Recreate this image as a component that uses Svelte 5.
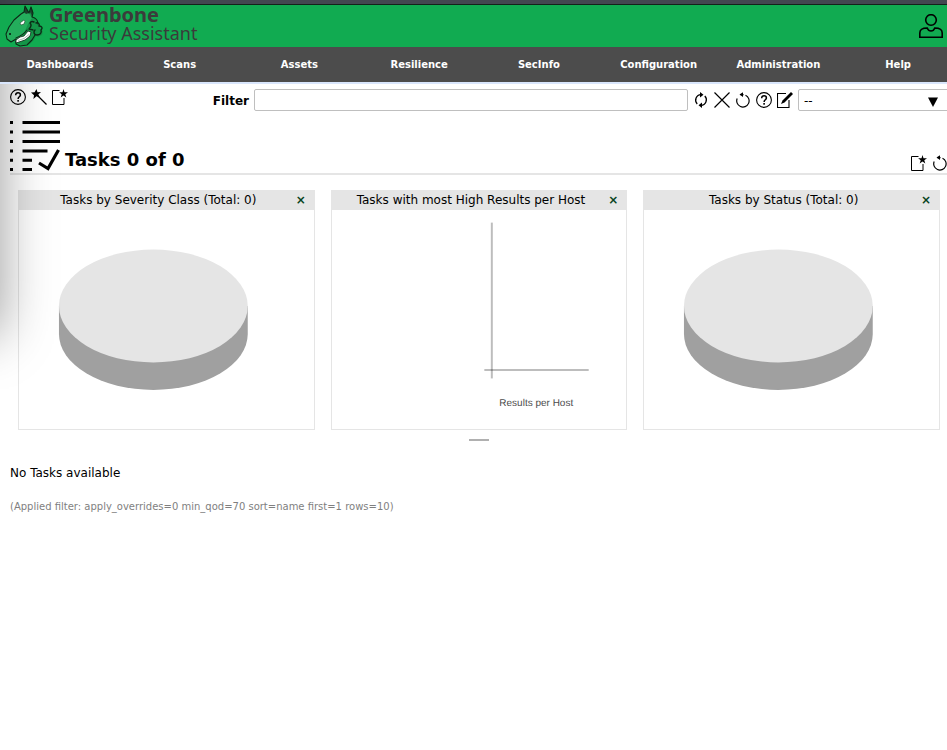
<script>
  const menu = ['Dashboards', 'Scans', 'Assets', 'Resilience', 'SecInfo', 'Configuration', 'Administration', 'Help'];
  const panels = [
    { title: 'Tasks by Severity Class (Total: 0)', kind: 'pie' },
    { title: 'Tasks with most High Results per Host', kind: 'bars' },
    { title: 'Tasks by Status (Total: 0)', kind: 'pie' }
  ];
  let filter = $state('');
</script>

{#snippet help()}
  <svg class="icon" viewBox="0 0 16 16" aria-hidden="true">
    <circle cx="8" cy="8" r="7.4" fill="none" stroke="#000" stroke-width="1.1" />
    <path d="M5.7 6.2C5.7 4.6 6.6 3.8 8 3.8s2.4.8 2.4 2.1c0 1.8-2.3 1.9-2.3 4" fill="none" stroke="#000" stroke-width="1.5" />
    <rect x="7.3" y="11" width="1.6" height="1.7" />
  </svg>
{/snippet}

{#snippet newDoc()}
  <svg class="icon" viewBox="0 0 16 16" aria-hidden="true">
    <path d="M7.5 1.5H.5V15.5H12V9" fill="none" stroke="#000" />
    <path d="M11.500 0l1 3.200H16l-2.700 2 1 3.200-2.800-1.900-2.800 1.900 1-3.200-2.600-2h3.400z" />
  </svg>
{/snippet}

{#snippet reset()}
  <svg class="icon" viewBox="0 0 16 16" aria-hidden="true">
    <path d="M5.500 2.600H8.500M10.500 3.200a6.200 6.200 0 1 1-8.300 3.200" fill="none" stroke="#000" stroke-width="1.200" />
    <path d="M4.500 2.600L8 .2v4.800z" />
  </svg>
{/snippet}

<div class="page">
  <div class="strip"></div>
  <header>
    <a class="brand" href="#home">
      <svg class="dragon" viewBox="0 0 40 42" aria-hidden="true">
        <path d="M16 9l3-2 1-6 3 5 1 2 2-6 2 5-1 6c3 1 6 3 6 7l3 1-1 3 3 2-1 4-4 2-2-1-2 4-4 4-7 1-5-1-1-3-5-1-4-2-1-5 3-7 5-6z" fill="#149448" />
        <path d="M16 9L9 15l-5 7-3 7 1 5 4 3c6-3 10-4 13-9l4-9 4-6-4-6z" fill="#24ad5c" />
        <path d="M19 7l1-6 4 7-3 1zM25 7l1-5 2 5-1 4z" fill="#1b3f2b" />
        <g fill="none" stroke="#0c2916" stroke-width="1.100" stroke-linejoin="round" stroke-linecap="round">
          <path d="M19 7l1-6 4 7 2-6 2 6-1 4c4 1 6 3 6 7M16 9L9 15l-5 7-3 7 1 5 4 3 5-3M19 7l-3 2M11 36v3l4 2 7-1 5-5 3-5" />
          <path d="M29 17c-2-1-3-1-4 1 2 2 1 4-1 6M31 18c2-1 4 1 3 3 3 0 4 2 2 4 1 3-1 5-4 5s-4-3-2-5M24 24c1 1 3 0 4 1" stroke-width="1.400" />
          <path d="M22 25c-3 4-6 6-11 8" />
        </g>
        <path d="M15 18l4-3 1 1-1 3-3 1z" fill="#fff" stroke="#0c2916" stroke-width=".5" />
        <path d="M11 35l4-3 4-1 4-5 3 1-1 4-5 4-6 2-3 1z" fill="#fff" stroke="#0c2916" stroke-width=".8" />
        <path d="M13 35.500l6-2 5-4" fill="none" stroke="#86a390" stroke-width=".7" />
        <circle cx="5" cy="29" r=".9" />
      </svg>
      <span class="name"><strong>Greenbone</strong><span>Security Assistant</span></span>
    </a>
    <button class="user" aria-label="User settings">
      <svg viewBox="0 0 24 24" aria-hidden="true">
        <g fill="none" stroke="#000" stroke-width="1.600">
          <circle cx="12" cy="6" r="5.300" />
          <path d="M.8 23.200V19c0-3.300 3-5 7.400-5 .8 2 2 3 3.800 3s3-1 3.800-3c4.400 0 7.400 1.700 7.400 5v4.200z" />
        </g>
      </svg>
    </button>
  </header>
  <nav>
    {#each menu as item}
      <a href="#{item.toLowerCase()}">{item}</a>
    {/each}
  </nav>

  <main>
    <div class="toolbar">
      <div class="icons">
        <button aria-label="Help: Tasks">{@render help()}</button>
        <button aria-label="Task Wizard">
          <svg class="icon" viewBox="0 0 16 16" aria-hidden="true">
            <path d="M6 6l9.500 9.500" stroke="#000" stroke-width="1.300" />
            <path d="M5.500 0l1 3.300 3.500-.2-2.700 2.300 1.700 3.400-3.500-1.500L2.400 10l.6-3.700L0 3.400l3.600-.2z" />
          </svg>
        </button>
        <button aria-label="New Task">{@render newDoc()}</button>
      </div>
      <form onsubmit={(e) => e.preventDefault()}>
        <label for="filter">Filter</label>
        <input id="filter" type="text" bind:value={filter} />
        <button aria-label="Update Filter">
          <svg class="icon" viewBox="0 0 16 16" aria-hidden="true">
            <path d="M4.200 12A5.500 5.500 0 0 1 8 2.700M11.800 4a5.500 5.500 0 0 1-3.800 9.300" fill="none" stroke="#000" stroke-width="1.300" />
            <path d="M7 0l3.500 2.700L7 5.400zM9 10.600v5.400l-3.500-2.700z" />
          </svg>
        </button>
        <button type="button" aria-label="Remove Filter">
          <svg class="icon" viewBox="0 0 16 16" aria-hidden="true"><path d="M.5.5l15 15M15.500.5l-15 15" stroke="#000" stroke-width="1.200" /></svg>
        </button>
        <button type="button" aria-label="Reset Filter">{@render reset()}</button>
        <button type="button" aria-label="Help: Powerfilter">{@render help()}</button>
        <button type="button" aria-label="Edit Filter">
          <svg class="icon" viewBox="0 0 16 16" aria-hidden="true">
            <path d="M9 1.500H.5V15.500H12V8" fill="none" stroke="#000" stroke-width="1.100" />
            <path d="M14 0l2 2-8.500 8.500L4 12l1.500-3.500z" />
          </svg>
        </button>
        <div class="choice">
          <select aria-label="Saved filter"><option>--</option></select>
          <svg viewBox="0 0 10 10" aria-hidden="true"><path d="M0 .5h10L5 10z" /></svg>
        </div>
      </form>
    </div>

    <div class="heading">
      <svg class="tasks" viewBox="0 0 50 50" aria-hidden="true">
        <path d="M0 1.500h3M0 11h3M0 20.500h3M0 30h3M0 39.300h3M0 48.500h3M12.500 1.500H50M12.500 11H50M12.500 20.500H50M12.500 30H37.500M12.500 39.300H22M12.500 48.500H22" stroke="#000" stroke-width="3" />
        <path d="M29 42l9 5.500L48.500 29" fill="none" stroke="#000" stroke-width="3.200" />
      </svg>
      <h1>Tasks 0 of 0</h1>
      <div class="icons">
        <button aria-label="New dashboard display">{@render newDoc()}</button>
        <button aria-label="Reset dashboard">{@render reset()}</button>
      </div>
    </div>

    <div class="panels">
      {#each panels as panel}
        <section>
          <div class="title">
            <h2>{panel.title}</h2>
            <button aria-label="Remove display">×</button>
          </div>
          {#if panel.kind === 'pie'}
            <svg class="chart" viewBox="0 0 295 219" role="img" aria-label={panel.title}>
              <path d="M40 96v28a94.500 56 0 0 0 189 0V96z" fill="#a0a0a0" />
              <ellipse cx="134.500" cy="96" rx="94.500" ry="56.500" fill="#e5e5e5" />
            </svg>
          {:else}
            <svg class="chart" viewBox="0 0 295 219" role="img" aria-label={panel.title}>
              <g stroke="#000" stroke-opacity=".26" stroke-width="2">
                <path d="M160 12.500V168.500" />
                <path d="M152.500 160H257" />
              </g>
              <text x="204.500" y="196" text-anchor="middle">Results per Host</text>
            </svg>
          {/if}
        </section>
      {/each}
    </div>
    <div class="grip"></div>

    <p class="empty">No Tasks available</p>
    <p class="applied">(Applied filter: apply_overrides=0 min_qod=70 sort=name first=1 rows=10)</p>
  </main>
  <div class="shade"></div>
</div>

<style>
  :global(body) { background: #fff; }
  .page {
    position: relative;
    overflow: hidden;
    min-height: 100vh;
    font-family: "DejaVu Sans", Verdana, sans-serif;
    font-size: 12px;
    color: #000;
  }
  button { display: block; padding: 0; border: 0; background: none; font: inherit; cursor: pointer; }
  a { color: inherit; text-decoration: none; }
  .icon { display: block; width: 16px; height: 16px; }
  .icons { display: flex; gap: 5px; }

  .strip { height: 4px; background: #434750; border-bottom: 1px solid #15201a; }
  header {
    display: flex;
    justify-content: space-between;
    align-items: center;
    height: 42px;
    padding: 0 4px 0 5px;
    background: #11ab51;
  }
  .brand { display: flex; align-items: flex-start; gap: 4px; color: #3b3b3b; }
  .dragon { width: 40px; height: 42px; }
  .name { display: flex; flex-direction: column; font-family: "Noto Sans", sans-serif; font-size: 18px; line-height: 19px; }
  .name strong { font-size: 20px; }
  .user svg { display: block; width: 24px; height: 24px; }

  nav {
    display: flex;
    height: 35px;
    margin-right: -11px;
    background: #4c4c4c;
    border-bottom: 2px solid #d9e6fc;
  }
  nav a { flex: 1 1 0; line-height: 35px; text-align: center; font-size: 10px; font-weight: bold; color: #fff; }

  main { margin-right: -1px; padding: 5px 0 0 10px; }
  .toolbar { display: flex; align-items: flex-start; justify-content: space-between; margin-right: -10px; }
  form { display: flex; align-items: center; gap: 5px; height: 22px; }
  label { line-height: 18px; padding-top: 2px; font-weight: bold; }
  input, select {
    box-sizing: border-box;
    height: 22px;
    border: 1px solid #bfbfbf;
    border-radius: 2px;
    background: #fff;
    color: #000;
    font: 12px "DejaVu Sans", sans-serif;
  }
  input { width: 434px; padding: 1px 8px; }
  .choice { position: relative; }
  select { display: block; width: 160px; padding: 2px 5px 0; appearance: none; }
  .choice svg { position: absolute; right: 20px; top: 8px; width: 10px; height: 10px; pointer-events: none; }

  .heading {
    display: flex;
    align-items: flex-end;
    gap: 5px;
    margin-top: 10px;
    padding-bottom: 2px;
    border-bottom: 2px solid #e5e5e5;
  }
  .tasks { width: 50px; height: 50px; }
  h1 { margin: 0; font-size: 18px; line-height: 22px; }
  .heading .icons { margin-left: auto; }

  .panels { display: flex; gap: 16px; padding: 15px 8px 0; }
  section { flex: 1 1 0; min-width: 0; border: 1px solid #e5e5e5; border-top: 0; }
  .title { display: flex; align-items: center; height: 20px; padding-left: 6px; background: #e5e5e5; }
  h2 { flex: 1; margin: 0; font-size: 12px; font-weight: normal; line-height: 22px; text-align: center; }
  .title button { width: 18px; margin-right: 4px; line-height: 22px; font-weight: bold; color: #074320; }
  .chart { display: block; width: 100%; height: 219px; }
  .chart text { font: 10px "Liberation Sans", Arial, sans-serif; fill: #4c4c4c; text-rendering: geometricPrecision; }
  .grip { width: 20px; height: 2px; margin: 9px auto 0; background: #b0b0b0; }
  p { margin: 0; }
  .empty { margin-top: 24px; line-height: 16px; }
  .applied { margin-top: 18px; font-size: 10px; line-height: 16px; color: #7f7f7f; }

  .shade {
    position: absolute;
    top: 0;
    left: -200px;
    width: 200px;
    height: 335px;
    box-shadow: 0 0 50px rgba(0, 0, 0, .4);
    pointer-events: none;
  }
  header, nav { position: relative; z-index: 1; }
</style>
